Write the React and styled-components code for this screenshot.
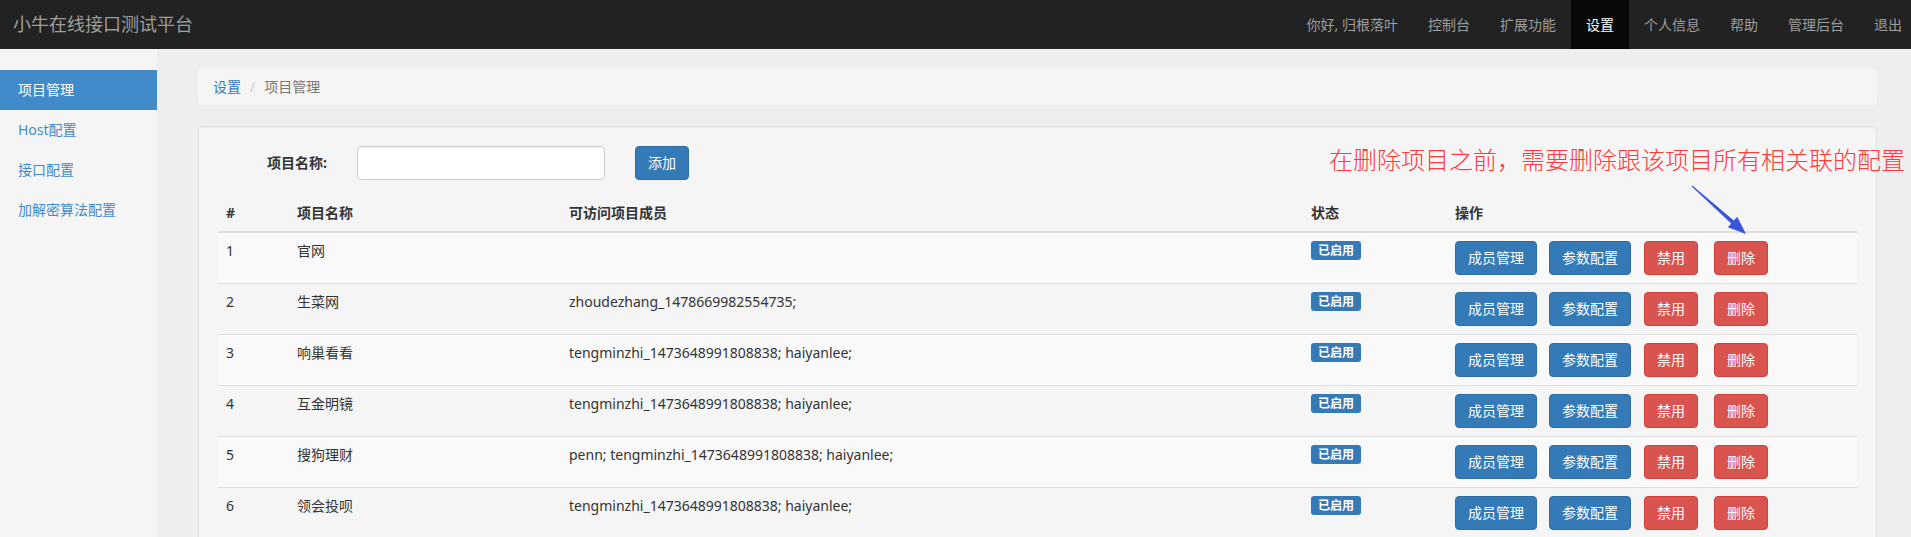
import React from "react";
import styled, { createGlobalStyle } from "styled-components";

const GlobalStyle = createGlobalStyle`
  html, body {
    margin: 0;
    padding: 0;
    overflow: hidden;
  }
  body {
    font-family: "Noto Sans", "Noto Sans CJK SC", sans-serif;
    font-size: 14px;
    line-height: 20px;
    color: #333;
    background: #eee;
  }
  * { box-sizing: border-box; }
`;

const Page = styled.div`
  width: 100%;
  height: 100vh;
  display: flex;
  flex-direction: column;
  overflow: hidden;
`;

const Navbar = styled.header`
  flex: none;
  height: 49px;
  background: #222;
  display: flex;
  align-items: stretch;
  justify-content: space-between;
  overflow: hidden;
`;

const Brand = styled.a`
  padding-left: 13px;
  font-size: 18px;
  line-height: 49px;
  color: #9d9d9d;
  text-decoration: none;
  white-space: nowrap;
`;

const NavList = styled.nav`
  display: flex;
  margin-right: -6px;
`;

const NavItem = styled.a`
  display: block;
  padding: 0 15px;
  line-height: 49px;
  font-size: 14px;
  white-space: nowrap;
  text-decoration: none;
  color: ${(p) => (p.$active ? "#fff" : "#9d9d9d")};
  background: ${(p) => (p.$active ? "#080808" : "transparent")};
`;

const Body = styled.div`
  flex: 1;
  display: flex;
  min-height: 0;
`;

const Sidebar = styled.aside`
  flex: none;
  width: 157px;
  background: #f5f5f5;
  padding-top: 21px;
`;

const SideItem = styled.a`
  display: block;
  padding: 10px 18px;
  line-height: 20px;
  font-size: 14px;
  text-decoration: none;
  white-space: nowrap;
  color: ${(p) => (p.$active ? "#fff" : "#428bca")};
  background: ${(p) => (p.$active ? "#428bca" : "transparent")};
`;

const Main = styled.main`
  flex: 1;
  min-width: 0;
  padding: 20px 34px 0 41px;
  background: #eee;
`;

const Breadcrumb = styled.div`
  display: flex;
  align-items: center;
  padding: 8px 15px;
  line-height: 20px;
  background: #f5f5f5;
  border-radius: 4px;
  margin-bottom: 21px;
`;

const CrumbLink = styled.a`
  color: #337ab7;
  text-decoration: none;
`;

const CrumbSep = styled.span`
  color: #ccc;
  padding: 0 9px 0 9px;
`;

const CrumbCurrent = styled.span`
  color: #777;
`;

const Well = styled.section`
  position: relative;
  background: #f5f5f5;
  border: 1px solid #e3e3e3;
  border-radius: 4px;
  padding: 19px;
  box-shadow: inset 0 1px 1px rgba(0, 0, 0, 0.05);
`;

const FormRow = styled.div`
  display: flex;
  align-items: center;
  height: 34px;
  margin-bottom: 15px;
`;

const FieldLabel = styled.label`
  width: 109px;
  margin-right: 30px;
  text-align: right;
  font-weight: bold;
  white-space: nowrap;
`;

const TextInput = styled.input`
  width: 248px;
  height: 34px;
  padding: 6px 12px;
  font-size: 14px;
  border: 1px solid #ccc;
  border-radius: 4px;
  background: #fff;
  box-shadow: inset 0 1px 1px rgba(0, 0, 0, 0.075);
  outline: none;
`;

const Button = styled.button`
  flex: none;
  margin-left: ${(p) => p.$ml || 0}px;
  padding: 6px 12px;
  font-family: inherit;
  font-size: 14px;
  line-height: 20px;
  color: #fff;
  border-radius: 4px;
  border: 1px solid ${(p) => (p.$danger ? "#d43f3a" : "#2e6da4")};
  background: ${(p) => (p.$danger ? "#d9534f" : "#337ab7")};
  white-space: nowrap;
  cursor: pointer;
`;

const Table = styled.table`
  width: 100%;
  border-collapse: collapse;
  table-layout: fixed;
`;

const Th = styled.th`
  text-align: left;
  padding: 8px;
  line-height: 20px;
  font-weight: bold;
  vertical-align: bottom;
  border-bottom: 2px solid #ddd;
  white-space: nowrap;
`;

const Tr = styled.tr`
  background: ${(p) => (p.$striped ? "#f9f9f9" : "transparent")};
`;

const Td = styled.td`
  padding: 8px;
  line-height: 20px;
  vertical-align: top;
  border-top: 1px solid #ddd;
  white-space: nowrap;
  overflow: hidden;
`;

const StatusLabel = styled.span`
  display: inline-block;
  vertical-align: top;
  padding: 3px 7px 2px;
  font-size: 12px;
  line-height: 14px;
  font-weight: bold;
  color: #fff;
  background: #337ab7;
  border-radius: 3px;
`;

const Actions = styled.div`
  display: flex;
`;

const Annotation = styled.div`
  position: absolute;
  left: 1130px;
  top: 20px;
  font-family: "Noto Sans CJK SC", sans-serif;
  font-size: 24px;
  font-weight: 300;
  line-height: 24px;
  color: #ff3a3a;
  white-space: nowrap;
  pointer-events: none;
`;

const ArrowSvg = styled.svg`
  position: absolute;
  left: 1487px;
  top: 54px;
  width: 66px;
  height: 58px;
  overflow: visible;
  pointer-events: none;
`;

const navItems = [
  "你好, 归根落叶",
  "控制台",
  "扩展功能",
  "设置",
  "个人信息",
  "帮助",
  "管理后台",
  "退出",
];

const sideItems = ["项目管理", "Host配置", "接口配置", "加解密算法配置"];

const rows = [
  { id: 1, name: "官网", members: "" },
  { id: 2, name: "生菜网", members: "zhoudezhang_1478669982554735;" },
  { id: 3, name: "响巢看看", members: "tengminzhi_1473648991808838; haiyanlee;" },
  { id: 4, name: "互金明镜", members: "tengminzhi_1473648991808838; haiyanlee;" },
  { id: 5, name: "搜狗理财", members: "penn; tengminzhi_1473648991808838; haiyanlee;" },
  { id: 6, name: "领会投呗", members: "tengminzhi_1473648991808838; haiyanlee;" },
];

export default function App() {
  return (
    <>
      <GlobalStyle />
      <Page>
        <Navbar>
          <Brand>小牛在线接口测试平台</Brand>
          <NavList>
            {navItems.map((t) => (
              <NavItem key={t} $active={t === "设置"}>
                {t}
              </NavItem>
            ))}
          </NavList>
        </Navbar>
        <Body>
          <Sidebar>
            {sideItems.map((t, i) => (
              <SideItem key={t} $active={i === 0}>
                {t}
              </SideItem>
            ))}
          </Sidebar>
          <Main>
            <Breadcrumb>
              <CrumbLink>设置</CrumbLink>
              <CrumbSep>/</CrumbSep>
              <CrumbCurrent>项目管理</CrumbCurrent>
            </Breadcrumb>
            <Well>
              <FormRow>
                <FieldLabel>项目名称:</FieldLabel>
                <TextInput type="text" />
                <Button $ml={30}>添加</Button>
              </FormRow>
              <Table>
                <colgroup>
                  <col style={{ width: 71 }} />
                  <col style={{ width: 272 }} />
                  <col style={{ width: 742 }} />
                  <col style={{ width: 144 }} />
                  <col />
                </colgroup>
                <thead>
                  <tr>
                    <Th>#</Th>
                    <Th>项目名称</Th>
                    <Th>可访问项目成员</Th>
                    <Th>状态</Th>
                    <Th>操作</Th>
                  </tr>
                </thead>
                <tbody>
                  {rows.map((r, i) => (
                    <Tr key={r.id} $striped={i % 2 === 0}>
                      <Td>{r.id}</Td>
                      <Td>{r.name}</Td>
                      <Td>{r.members}</Td>
                      <Td>
                        <StatusLabel>已启用</StatusLabel>
                      </Td>
                      <Td>
                        <Actions>
                          <Button>成员管理</Button>
                          <Button $ml={12}>参数配置</Button>
                          <Button $ml={13} $danger>
                            禁用
                          </Button>
                          <Button $ml={16} $danger>
                            删除
                          </Button>
                        </Actions>
                      </Td>
                    </Tr>
                  ))}
                </tbody>
              </Table>
              <Annotation>在删除项目之前，需要删除跟该项目所有相关联的配置</Annotation>
              <ArrowSvg viewBox="0 0 66 58">
                <polygon
                  points="6.3,4.6 47.8,39.5 51.2,35.7 60,53 41.8,46.3 45.2,42.5 5.7,5.4"
                  fill="#3a56d6"
                />
              </ArrowSvg>
            </Well>
          </Main>
        </Body>
      </Page>
    </>
  );
}
